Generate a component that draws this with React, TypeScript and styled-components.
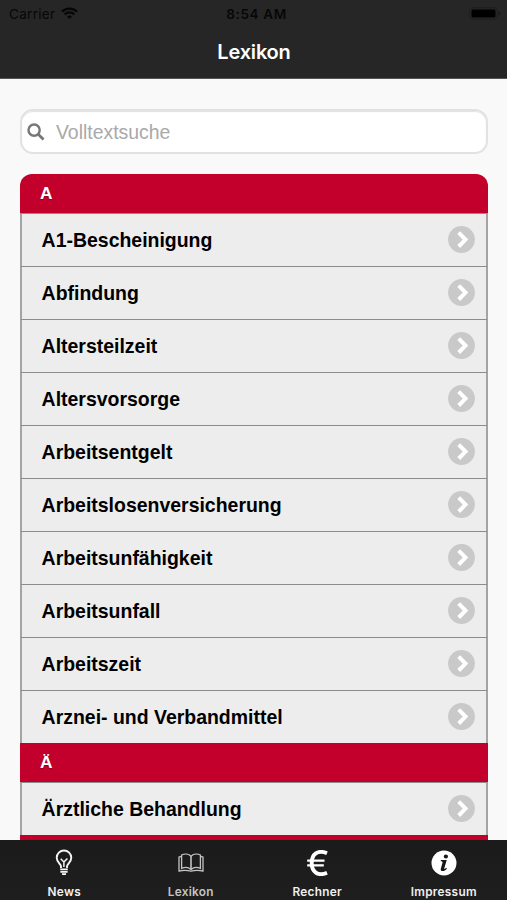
import React from "react";
import styled, { createGlobalStyle } from "styled-components";

const GlobalStyle = createGlobalStyle`
  * { box-sizing: border-box; }
  body { margin: 0; background: #f9f9f9; overflow: hidden; }
`;

const Screen = styled.div`
  display: flex;
  flex-direction: column;
  width: 507px;
  height: 900px;
  overflow: hidden;
  background: #f9f9f9;
  font-family: "Liberation Sans", Arial, sans-serif;
`;

const TopBar = styled.header`
  flex: none;
  height: 79px;
  background: #262626;
  border-bottom: 1px solid #555;
  font-family: Inter, "Liberation Sans", sans-serif;
`;

const StatusBar = styled.div`
  display: grid;
  grid-template-columns: 1fr auto 1fr;
  align-items: center;
  height: 27px;
  padding: 0 6px 0 9px;
  color: #070707;
  font-size: 13.5px;
`;

const Carrier = styled.div`
  display: flex;
  align-items: center;
  gap: 6px;
  letter-spacing: 0.3px;
`;

const Clock = styled.div`
  padding-left: 3px;
  font-weight: 600;
  font-size: 13.6px;
  letter-spacing: 0.6px;
`;

const BatterySlot = styled.div`
  display: flex;
  justify-content: flex-end;
`;

const Title = styled.h1`
  margin: 0;
  height: 50px;
  line-height: 50px;
  text-align: center;
  color: #fff;
  font-size: 20px;
  font-weight: 600;
  letter-spacing: -0.2px;
  padding-left: 1px;
`;

const Content = styled.main`
  flex: 1;
  min-height: 0;
  overflow: hidden;
  padding: 30px 19px 0 20px;
`;

const SearchBox = styled.label`
  display: flex;
  align-items: center;
  gap: 11px;
  height: 45px;
  padding: 0 6px 0 5px;
  background: #fff;
  border: 2px solid #e2e2e2;
  border-radius: 13px;
  box-shadow: inset 0 1px 1px #e2e2e2;
`;

const SearchInput = styled.input`
  flex: 1;
  min-width: 0;
  padding: 2px 0 0;
  border: 0;
  outline: 0;
  background: transparent;
  font: 19.4px "Liberation Sans", Arial, sans-serif;
  &::placeholder { color: #a9a9a9; opacity: 1; }
`;

const List = styled.div`
  margin-top: 20px;
  border-radius: 12px 12px 0 0;
  overflow: hidden;
`;

const SectionHeader = styled.h2`
  margin: 0;
  height: 39px;
  padding: 0 20px;
  line-height: 39px;
  background: #c3002b;
  color: #fff;
  font-size: 17.3px;
  font-weight: 700;
  text-shadow: 0 1px 1px rgba(70, 0, 10, 0.5);
`;

const Row = styled.a`
  display: flex;
  align-items: center;
  justify-content: space-between;
  height: 53px;
  padding: 0 11px 0 19.6px;
  background: #ededed;
  border: solid #a4a4a4;
  border-width: 1px 2px 0;
  border-top-color: #8c8c8c;
  color: #000;
  font-size: 19.47px;
  font-weight: 700;
  white-space: nowrap;
`;

const TabBar = styled.nav`
  flex: none;
  display: grid;
  grid-template-columns: repeat(4, 1fr);
  height: 60px;
  padding-left: 1px;
  background: linear-gradient(#1b1b1b, #1e1e1e);
`;

const Tab = styled.a<{ $dim?: boolean }>`
  display: flex;
  flex-direction: column;
  align-items: center;
  padding-top: 9px;
  color: ${(p) => (p.$dim ? "#c4c4c4" : "#f0f0f0")};
  font-family: Inter, "Liberation Sans", sans-serif;
  font-size: 11.8px;
  font-weight: 600;
  letter-spacing: 0.3px;
`;

const TabIcon = styled.span`
  display: flex;
  align-items: center;
  justify-content: center;
  height: 28px;
`;

const TabLabel = styled.span`
  height: 14px;
  margin-top: 8px;
  line-height: 14px;
`;

const Wifi = () => (
  <svg width="17" height="13" viewBox="0 0 17 13" fill="none" stroke="#070707" strokeWidth="2.3">
    <path d="M1 4.6C5 .6 12 .6 16 4.6M3.7 7.4c2.7-2.6 6.9-2.6 9.6 0" />
    <path d="M8.5 12 6 9.5c1.4-1.3 3.6-1.3 5 0z" fill="#070707" stroke="none" />
  </svg>
);

const Battery = () => (
  <svg width="32" height="14" viewBox="0 0 32 14">
    <rect x=".7" y=".7" width="27.6" height="11.6" rx="3.2" fill="none" stroke="#1e1e1e" />
    <rect x="2.5" y="2.5" width="24" height="8" rx="1.5" fill="#000" />
    <path d="M29.7 4.5c2 .8 2 3.2 0 4z" fill="#181818" />
  </svg>
);

const Magnifier = () => (
  <svg width="18" height="18" viewBox="0 0 18 18" fill="none" stroke="#777" strokeWidth="2.4">
    <circle cx="7.1" cy="7.1" r="5.6" />
    <path d="m11.2 11.2 5.3 5.3" strokeWidth="2.8" />
  </svg>
);

const Chevron = () => (
  <svg width="27" height="28" viewBox="0 0 27 28">
    <circle cx="13.5" cy="13.5" r="13.4" fill="#c9c9c9" />
    <path d="m10.7 6.7 6.8 6.9-6.8 6.9" fill="none" stroke="#fff" strokeWidth="4" />
  </svg>
);

const Bulb = () => (
  <svg width="20" height="28" viewBox="0 0 20 28" fill="none" stroke="#f5f5f5" strokeWidth="1.9">
    <path d="M7 19v-1.5c0-2.5-4.3-4.4-4.3-8.7a7.3 7.3 0 0 1 14.6 0c0 4.3-4.3 6.2-4.3 8.7V19" />
    <path d="M9.9 18v-5L6.7 9.7M9.9 13l3.5-3.6" strokeWidth="1.5" />
    <path d="M6.2 20.3h7.6M6.4 22.9h7.2M8 25.2h4" strokeWidth="1.8" />
  </svg>
);

const Book = () => (
  <svg width="26" height="20" viewBox="0 0 26 20" fill="none" stroke="#c4c4c4" strokeWidth="1.3">
    <path d="M13 3.3C10.7.8 6.6.6 3.6 2v13.5c3-1.4 7.1-1 9.4 1 2.3-2 6.4-2.4 9.4-1V2C19.4.6 15.3.8 13 3.3z" />
    <path d="M13 3.3v13.2" strokeWidth="1.6" />
    <path d="M3.5 3.4 1 4v14c4-.9 8.4-.9 12 .2 3.6-1.1 8-1.1 12-.2V4l-2.5-.6" />
  </svg>
);

const Euro = () => (
  <svg width="22" height="26" viewBox="0 0 22 26" fill="none" stroke="#fff">
    <path d="M21 3.2C11.500-.7 5.700 4.500 5.700 13s5.800 13.700 15.300 9.800" strokeWidth="3.900" />
    <path d="M1.200 10.600h17.300M1.200 15.400h16.600" strokeWidth="2.300" />
  </svg>
);

const Info = () => (
  <svg width="26" height="26" viewBox="0 0 26 26">
    <circle cx="13" cy="13" r="12.5" fill="#fff" />
    <circle cx="14.9" cy="6.500" r="2.100" fill="#171717" />
    <path d="M9.800 10h5.900l-2.400 8.300c-.2 1 .5.700 1.800-.6l.8.700c-2 3.200-7 3.700-6.100.3l1.700-5.900c.3-1.100-.2-1.400-1.700-1.500z" fill="#171717" />
  </svg>
);

const sections = [
  {
    letter: "A",
    entries: [
      "A1-Bescheinigung",
      "Abfindung",
      "Altersteilzeit",
      "Altersvorsorge",
      "Arbeitsentgelt",
      "Arbeitslosenversicherung",
      "Arbeitsunfähigkeit",
      "Arbeitsunfall",
      "Arbeitszeit",
      "Arznei- und Verbandmittel",
    ],
  },
  { letter: "Ä", entries: ["Ärztliche Behandlung"] },
  { letter: "", entries: [] },
];

const tabs = [
  { label: "News", icon: <Bulb /> },
  { label: "Lexikon", icon: <Book />, dim: true },
  { label: "Rechner", icon: <Euro /> },
  { label: "Impressum", icon: <Info /> },
];

export default function App() {
  return (
    <Screen>
      <GlobalStyle />
      <TopBar>
        <StatusBar>
          <Carrier>
            Carrier <Wifi />
          </Carrier>
          <Clock>8:54 AM</Clock>
          <BatterySlot>
            <Battery />
          </BatterySlot>
        </StatusBar>
        <Title>Lexikon</Title>
      </TopBar>
      <Content>
        <SearchBox>
          <Magnifier />
          <SearchInput placeholder="Volltextsuche" />
        </SearchBox>
        <List>
          {sections.map((section, i) => (
            <React.Fragment key={i}>
              <SectionHeader>{section.letter}</SectionHeader>
              {section.entries.map((entry) => (
                <Row key={entry}>
                  {entry}
                  <Chevron />
                </Row>
              ))}
            </React.Fragment>
          ))}
        </List>
      </Content>
      <TabBar>
        {tabs.map((tab) => (
          <Tab key={tab.label} $dim={tab.dim}>
            <TabIcon>{tab.icon}</TabIcon>
            <TabLabel>{tab.label}</TabLabel>
          </Tab>
        ))}
      </TabBar>
    </Screen>
  );
}
